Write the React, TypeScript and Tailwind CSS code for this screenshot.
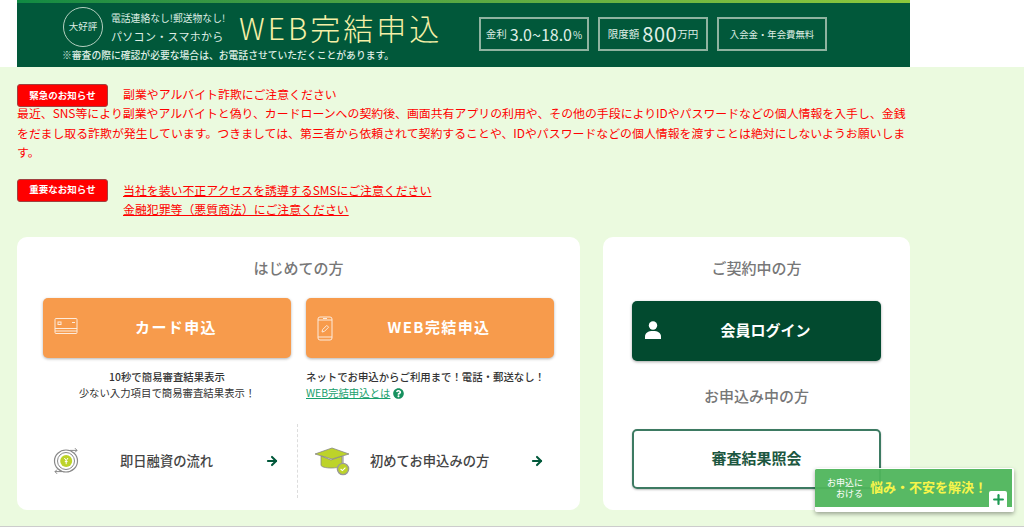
import React from 'react';
import { ArrowRight, Plus } from 'lucide-react';
import { FaQuestionCircle } from 'react-icons/fa';

const font = "font-['Noto_Sans_CJK_JP','Noto_Sans',sans-serif]";

const CardIcon = () => (
  <svg width="24" height="20" viewBox="0 0 24 20" fill="none" stroke="white" strokeWidth="1" className="opacity-80">
    <rect x="1" y="2.5" width="22" height="15" rx="1" />
    <path d="M1 12.5h22M1 15h22" />
    <rect x="4" y="6" width="3" height="2.5" />
    <path d="M18 6.5h3" />
  </svg>
);

const PhoneIcon = () => (
  <svg width="16" height="25" viewBox="0 0 16 25" fill="none" stroke="white" strokeWidth="1" className="opacity-80">
    <rect x="1" y="1" width="14" height="23" rx="2" />
    <path d="M1 4h14M1 21h14M6 2.5h4" />
    <path d="M5 16l.6-2.4 4.2-4.2 1.8 1.8-4.2 4.2z" />
  </svg>
);

const UserIcon = () => (
  <svg width="18" height="18" viewBox="0 0 18 18" fill="white">
    <circle cx="9" cy="4.5" r="4.2" />
    <path d="M1 18v-2.5C1 12 4 10 9 10s8 2 8 5.5V18z" />
  </svg>
);

const YenIcon = () => (
  <svg width="28" height="28" viewBox="0 0 28 28" fill="none">
    <ellipse cx="14" cy="14" rx="11.5" ry="11" stroke="#888" strokeWidth="1.2" />
    <circle cx="14" cy="14" r="8.5" fill="white" stroke="#888" strokeWidth="1" />
    <circle cx="14.2" cy="14" r="6" fill="#bdd32a" />
    <path d="M12.4 11l1.8 2.6 1.8-2.6M14.2 13.6v3.6M12.8 14.6h2.8" stroke="white" strokeWidth="1" />
    <path d="M18 3.4h7l-2-2.2M25 3.4l-2 2M10 24.6H3l2 2.2M3 24.6l2-2" stroke="#888" strokeWidth="1" />
  </svg>
);

const GradIcon = () => (
  <svg width="36" height="30" viewBox="0 0 36 30" fill="none">
    <path d="M7 10v9c0 2 5 3 10 3s11-1 11-3v-9l-11 4z" fill="#bdd32a" stroke="#888" strokeWidth="0.8" />
    <path d="M1 8l17-6 17 6-17 5z" fill="#bdd32a" stroke="#888" strokeWidth="0.8" />
    <path d="M29 10v10" stroke="#888" strokeWidth="1" />
    <circle cx="29" cy="23" r="5.6" fill="#bdd32a" stroke="#999" strokeWidth="1.4" />
    <path d="M26.6 23l1.8 1.6 3-3" stroke="white" strokeWidth="1.1" />
  </svg>
);

const StatBox = ({ children }: { children: React.ReactNode }) => (
  <div className="w-[110px] h-[34px] border-2 border-[#8fb3a0] flex items-center justify-center whitespace-nowrap text-[#dfeee5]">
    {children}
  </div>
);

const Banner = () => (
  <div className="w-[893px] h-[67px] ml-[17px] bg-[#01583a] flex flex-col">
    <div className="h-[3px] bg-gradient-to-r from-[#0f8a43] to-[#8cc83c]" />
    <div className="flex items-center h-[41px] mt-[3px] pl-[46px]">
      <div className="w-[40px] h-[40px] rounded-full border border-[#b5d0c0] flex items-center justify-center text-[9.5px] text-[#dfeee5] shrink-0">
        大好評
      </div>
      <div className="ml-[8px] w-[128px] leading-[18px] text-[#dfeee5] whitespace-nowrap">
        <div className="text-[9.8px]">電話連絡なし!郵送物なし!</div>
        <div className="text-[11px] tracking-[0.3px]">パソコン・スマホから</div>
      </div>
      <div className="w-[204px] text-[30px] leading-[36px] font-light tracking-[3px] text-[#f6f0a6] whitespace-nowrap">
        WEB完結申込
      </div>
      <div className="ml-[36px] flex gap-[9px] self-start mt-[11px]">
        <StatBox>
          <span className="text-[10.5px]">金利</span>
          <span className="text-[16px] ml-[3px]">3.0~18.0</span>
          <span className="text-[10px] ml-[1px]">%</span>
        </StatBox>
        <StatBox>
          <span className="text-[10.5px]">限度額</span>
          <span className="text-[20px] ml-[3px] tracking-[0.5px]">800</span>
          <span className="text-[10.5px]">万円</span>
        </StatBox>
        <StatBox>
          <span className="text-[9.4px]">入会金・年会費無料</span>
        </StatBox>
      </div>
    </div>
    <div className="pl-[45px] text-[9.8px] leading-[14px] mt-[1px] font-medium text-[#dfeee5] whitespace-nowrap">
      ※審査の際に確認が必要な場合は、お電話させていただくことがあります。
    </div>
  </div>
);

const Badge = ({ children }: { children: React.ReactNode }) => (
  <div className="w-[91px] h-[23px] shrink-0 bg-[#ff0000] border border-[#a04040] rounded-[3px] text-white text-[9.5px] font-bold flex items-center justify-center">
    {children}
  </div>
);

const Notices = () => (
  <div className="w-[893px] ml-[17px] mt-[17px] text-[#ff0000] text-[11.9px] leading-[19.5px]">
    <div className="flex items-start h-[19px]">
      <Badge>緊急のお知らせ</Badge>
      <span className="ml-[15px]">副業やアルバイト詐欺にご注意ください</span>
    </div>
    <p>
      最近、SNS等により副業やアルバイトと偽り、カードローンへの契約後、画面共有アプリの利用や、その他の手段によりIDやパスワードなどの個人情報を入手し、金銭をだまし取る詐欺が発生しています。つきましては、第三者から依頼されて契約することや、IDやパスワードなどの個人情報を渡すことは絶対にしないようお願いします。
    </p>
    <div className="flex mt-[17px]">
      <Badge>重要なお知らせ</Badge>
      <div className="ml-[15px] pt-[1px] leading-[19px] underline">
        <div className="h-[19px]">当社を装い不正アクセスを誘導するSMSにご注意ください</div>
        <div className="h-[19px]">金融犯罪等（悪質商法）にご注意ください</div>
      </div>
    </div>
  </div>
);

const OrangeButton = ({ icon, label }: { icon: React.ReactNode; label: string }) => (
  <div className="relative w-[248px] h-[60px] pl-[18px] rounded-[5px] bg-[#f79b4c] shadow-[0_1px_3px_rgba(0,0,0,0.3)] flex items-center justify-center text-white text-[15px] font-bold tracking-[1.4px]">
    <span className="absolute left-[11px] top-[18px] flex">{icon}</span>
    {label}
  </div>
);

export default function App() {
  return (
    <div className={`relative h-[527px] overflow-hidden bg-[#ebfadf] border-b border-[#ccc] ${font}`}>
      <div className="bg-white h-[67px]">
        <Banner />
      </div>
      <Notices />

      <div className="w-[893px] ml-[17px] mt-[19px] flex justify-between">
        <section className="w-[563px] h-[273px] bg-white rounded-[10px] pt-[21px] px-[26px]">
          <h2 className="text-center text-[15px] leading-[20px] font-medium text-[#777]">はじめての方</h2>
          <div className="flex gap-[15px] mt-[20px]">
            <div className="w-[248px]">
              <OrangeButton icon={<CardIcon />} label="カード申込" />
              <div className="mt-[11px] text-center text-[10.4px] leading-[16.5px] text-[#333]">
                <div className="font-medium">10秒で簡易審査結果表示</div>
                <div>少ない入力項目で簡易審査結果表示！</div>
              </div>
            </div>
            <div className="w-[248px]">
              <OrangeButton icon={<PhoneIcon />} label="WEB完結申込" />
              <div className="mt-[11px] text-[10.4px] leading-[16.5px] text-[#333]">
                <div className="font-medium whitespace-nowrap">ネットでお申込からご利用まで！電話・郵送なし！</div>
                <div className="flex items-center gap-[3px]">
                  <span className="underline text-[#17a06c]">WEB完結申込とは</span>
                  <FaQuestionCircle size={11} className="text-[#17915f]" />
                </div>
              </div>
            </div>
          </div>
          <div className="flex mt-[22px]">
            <div className="flex items-center w-[255px] h-[74px] pl-[9px] pr-[18px] border-r border-dashed border-[#ddd] text-[13.3px] font-medium text-[#444]">
              <YenIcon />
              <span className="ml-[40px] whitespace-nowrap">即日融資の流れ</span>
              <ArrowRight size={14} strokeWidth={3.5} className="ml-auto text-[#01583a] shrink-0" />
            </div>
            <div className="flex items-center w-[248px] h-[74px] pl-[16px] pr-[2px] text-[13.3px] font-medium text-[#444]">
              <GradIcon />
              <span className="ml-[20px] whitespace-nowrap">初めてお申込みの方</span>
              <ArrowRight size={14} strokeWidth={3.5} className="ml-auto text-[#01583a] shrink-0" />
            </div>
          </div>
        </section>

        <section className="w-[307px] h-[273px] bg-white rounded-[10px] pt-[21px] px-[29px]">
          <h2 className="text-center text-[15px] leading-[20px] font-medium text-[#777]">ご契約中の方</h2>
          <div className="relative mt-[23px] h-[60px] pl-[18px] rounded-[5px] bg-[#024a2f] shadow-[0_1px_3px_rgba(0,0,0,0.35)] flex items-center justify-center text-white text-[15px] font-bold">
            <span className="absolute left-[12px] top-[20px] flex"><UserIcon /></span>
            会員ログイン
          </div>
          <h2 className="mt-[25px] text-center text-[15px] leading-[20px] font-medium text-[#777]">お申込み中の方</h2>
          <div className="mt-[23px] h-[60px] rounded-[5px] border-2 border-[#3d7a62] shadow-[0_1px_2px_rgba(0,0,0,0.25)] flex items-center justify-center text-[#1c5740] text-[15px] font-bold">
            審査結果照会
          </div>
        </section>
      </div>

      {/* floating help tab */}
      <div className="absolute left-[815px] top-[468px] w-[199px] h-[44px] bg-[#4fb55c]/95 rounded-[2px] border-r-2 border-b-[5px] border-t border-white shadow-[0_2px_4px_rgba(0,0,0,0.35)] flex items-center pl-[12px]">
        <div className="text-[9px] leading-[11px] text-white text-right w-[36px] shrink-0">
          <div className="whitespace-nowrap">お申込に</div>
          <div className="whitespace-nowrap">おける</div>
        </div>
        <div className="ml-[7px] mb-[2px] text-[13px] font-bold text-[#f7f54a] whitespace-nowrap">悩み・不安を解決！</div>
        <div className="absolute right-[5px] bottom-0 w-[18px] h-[16px] bg-white rounded-t-[2px] flex items-center justify-center">
          <Plus size={15} strokeWidth={3.5} className="text-[#1d9a52]" />
        </div>
      </div>
    </div>
  );
}
